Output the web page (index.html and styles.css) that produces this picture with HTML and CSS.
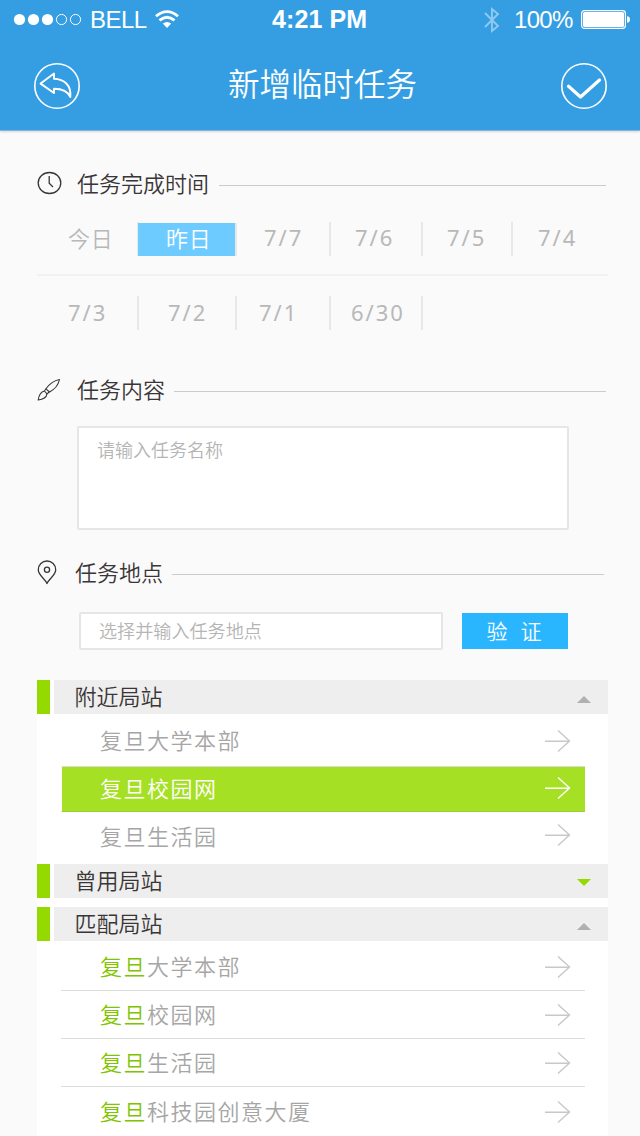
FILE: index.html
```html
<!DOCTYPE html>
<html lang="zh-CN">
<head>
<meta charset="utf-8">
<title>新增临时任务</title>
<link rel="stylesheet" href="styles.css">
</head>
<body>
<svg class="defs" width="0" height="0">
  <symbol id="arrow" viewBox="0 0 26 22"><path d="M0 11.2H24.5M13 .5L24.5 11L13 21.5"/></symbol>
</svg>
<header class="header">
  <div class="status">
    <div class="status-left">
      <svg width="70" height="14" viewBox="0 0 70 14"><g fill="#fff"><circle cx="6.5" cy="6.5" r="5.6"/><circle cx="20.5" cy="6.5" r="5.6"/><circle cx="34.5" cy="6.5" r="5.6"/></g><g fill="none" stroke="#fff"><circle cx="48.5" cy="6.5" r="5.1"/><circle cx="62.5" cy="6.5" r="5.1"/></g></svg>
      <span class="carrier">BELL</span>
      <svg class="wifi" width="24" height="19" viewBox="0 0 24 19"><g fill="none" stroke="#fff" stroke-width="2.8"><path d="M1 6.2Q12-3 23 6.2"/><path d="M4.5 10.4Q12 4.1 19.5 10.4"/></g><path fill="#fff" d="M7.8 13.6Q12 10.2 16.2 13.6L12 18Z"/></svg>
    </div>
    <div class="clock">4:21 PM</div>
    <div class="status-right">
      <svg width="18" height="28" viewBox="0 0 18 28"><path fill="none" stroke="#fff" stroke-opacity=".45" stroke-width="1.9" d="M3 7L16 20L10 25V3L16 8L3 21"/></svg>
      <span class="percent">100%</span>
      <svg width="50" height="20" viewBox="0 0 50 20"><rect x=".6" y=".6" width="43.8" height="17.8" rx="2.8" fill="none" stroke="#fff" stroke-width="1.2"/><rect x="2" y="2" width="41" height="15" rx="1.5" fill="#fff"/><path fill="#fff" d="M46 6.2Q49 6.6 49 9.5T46 12.8Z"/></svg>
    </div>
  </div>
  <div class="nav">
    <svg width="48" height="48" viewBox="0 0 48 48"><g fill="none" stroke="#fff"><circle cx="24" cy="24" r="22.2" stroke-width="1.6"/><path stroke-width="1.9" stroke-linejoin="round" d="M7.6 21.6L21 11.5V16.7C31 17 38.5 23 37.3 35C35 29.5 30 26.7 21 26.7V31Z"/></g></svg>
    <h1 class="title">新增临时任务</h1>
    <svg width="48" height="48" viewBox="0 0 48 48"><g fill="none" stroke="#fff"><circle cx="24" cy="24" r="22.2" stroke-width="1.6"/><path stroke-width="3.2" stroke-linecap="round" stroke-linejoin="round" d="M8.5 24.3L20.5 35L39.5 18"/></g></svg>
  </div>
</header>

<section class="time">
  <div class="heading">
    <svg width="26" height="26" viewBox="0 0 26 26"><g fill="none" stroke="#3a3637" stroke-width="1.3"><ellipse cx="12.5" cy="13" rx="11.3" ry="10.5"/><path d="M12.2 6V13.2L16 17"/></g></svg>
    <h2>任务完成时间</h2><i class="rule"></i>
  </div>
  <div class="dates">
    <span class="date day c1">今日</span><span class="date day c2 selected">昨日</span><span class="date c3">7/7</span><span class="date c4">7/6</span><span class="date c5">7/5</span><span class="date c6">7/4</span>
  </div>
  <div class="dates second">
    <span class="date c1">7/3</span><span class="date c2">7/2</span><span class="date c3">7/1</span><span class="date c4">6/30</span>
  </div>
</section>

<section class="content">
  <div class="heading">
    <svg width="26" height="26" viewBox="0 0 26 26"><g fill="none" stroke="#3a3637" stroke-width="1.1" stroke-linejoin="round"><path d="M22.5 2.5C21.5 7 18.5 12 12.5 15L9 11.8C12 7.5 17 3.5 22.5 2.5Z"/><path d="M9 11.8L7.4 14L10 16.8L12.5 15"/><path d="M7.4 14C4 14.8 2 17.5 1.2 23C6 22.4 9.4 20.5 10 16.8"/></g></svg>
    <h2>任务内容</h2><i class="rule"></i>
  </div>
  <div class="textarea">请输入任务名称</div>
</section>

<section class="place">
  <div class="heading">
    <svg width="26" height="26" viewBox="0 0 26 26"><g fill="none" stroke="#3a3637" stroke-width="1.3" stroke-linejoin="round"><path d="M10 23.5C8.5 19 1.3 15.5 1.3 9.7A8.7 8.7 0 0 1 18.7 9.7C18.7 15.5 11.5 19 10 23.5Z"/><circle cx="10" cy="9.7" r="2.6"/></g></svg>
    <h2>任务地点</h2><i class="rule"></i>
  </div>
  <div class="verify">
    <div class="input">选择并输入任务地点</div>
    <div class="button"><span>验</span><span>证</span></div>
  </div>
</section>

<main class="stations">
  <div class="group"><span>附近局站</span><i class="up"></i></div>
  <ul class="near">
    <li>复旦大学本部<svg class="arrow"><use href="#arrow"/></svg></li>
    <li class="active">复旦校园网<svg class="arrow"><use href="#arrow"/></svg></li>
    <li>复旦生活园<svg class="arrow"><use href="#arrow"/></svg></li>
  </ul>
  <div class="group used"><span>曾用局站</span><i class="down"></i></div>
  <div class="group"><span>匹配局站</span><i class="up"></i></div>
  <ul class="match">
    <li><b>复旦</b>大学本部<svg class="arrow"><use href="#arrow"/></svg></li>
    <li><b>复旦</b>校园网<svg class="arrow"><use href="#arrow"/></svg></li>
    <li><b>复旦</b>生活园<svg class="arrow"><use href="#arrow"/></svg></li>
    <li><b>复旦</b>科技园创意大厦<svg class="arrow"><use href="#arrow"/></svg></li>
  </ul>
</main>
</body>
</html>
```
FILE: styles.css
```css
* { box-sizing: border-box; }
html, body { margin: 0; padding: 0; }
body {
  width: 640px; height: 1136px; overflow: hidden; background: #fafafa;
  font-family: "Noto Sans CJK SC", sans-serif; font-weight: 350; color: #3a3637;
  display: flex; flex-direction: column;
}
svg { display: block; flex: none; }
.defs { display: none; }
h1, h2, ul { margin: 0; padding: 0; font-weight: inherit; list-style: none; }

.header { flex: none; height: 131px; background: #359ee3; border-bottom: 1px solid #82b7da; box-shadow: 0 1px 2px rgba(0,0,0,.14); color: #fff; }
.status { display: grid; grid-template-columns: 272px 1fr 158px; height: 40px; line-height: 40px; font-family: "Liberation Sans", sans-serif; }
.status-left { display: flex; align-items: center; padding-left: 13px; }
.carrier { margin-left: 7px; width: 65px; font-size: 24px; letter-spacing: -.5px; }
.wifi { margin-top: -2px; }
.clock { font-size: 25px; font-weight: 700; line-height: 39px; letter-spacing: .1px; }
.status-right { display: flex; align-items: center; }
.status-right svg { margin-top: -1px; }
.percent { margin-left: 14px; width: 67px; font-size: 24px; letter-spacing: -.7px; }
.nav { display: flex; justify-content: space-between; align-items: center; height: 91px; padding: 0 32px 0 33px; }
.title { font-size: 31.5px; line-height: 40px; margin: -7px 0 0 4px; }

.heading { display: flex; align-items: center; height: 26px; }
.heading h2 { font-size: 22px; line-height: 26px; margin: -4px 0 0 14px; }
.rule { flex: 1; height: 1px; margin: 3px 34px 0 9px; background: #ccc; }
.time { flex: none; height: 245px; padding: 39px 0 0 37px; }
.time .heading h2 { margin-top: -3px; }
.time .rule { margin: 4px 34px 0 10px; }
.dates { display: grid; grid-template-columns: 102px 98px 94px 92px 90px 95px; width: 571px; height: 54px; margin-top: 26px; border-bottom: 2px solid #f1f1f1; }
.second { margin-top: 20px; border: 0; }
.date { height: 34px; line-height: 31px; border-right: 2px solid #e8e8e8; font-size: 22px; letter-spacing: 2px; color: #b8b8b8; font-family: "Noto Sans", "Noto Sans CJK SC", sans-serif; font-weight: 400; white-space: nowrap; }
.day { font-weight: 350; letter-spacing: .8px; line-height: 33px; }
.c1 { padding-left: 31px; }
.c2 { padding-left: 28px; }
.c3 { padding-left: 27px; }
.c4 { padding-left: 24px; }
.c5 { padding-left: 24px; }
.c6 { padding-left: 25px; border: 0; }
.second .date { line-height: 32px; }
.second .c2 { padding-left: 29px; }
.second .c3 { padding-left: 22px; }
.second .c4 { padding-left: 20px; }
.selected { height: 33px; margin: 1px 0 0 -1px; line-height: 31px; background: #6dcbff; background-clip: padding-box; color: #fff; }

.content { flex: none; height: 183px; padding: 1px 0 0 37px; }
.textarea { width: 492px; height: 104px; margin: 23px 0 0 40px; padding: 8px 18px; border: 2px solid #e6e6e6; border-radius: 2px; background: #fff; color: #b5b5b5; font-size: 18px; line-height: 26px; }
.place { flex: none; height: 121px; padding: 1px 0 0 37px; }
.place .heading h2 { margin-left: 12px; }
.place .rule { margin: 3px 36px 0 9px; }
.verify { display: flex; align-items: center; gap: 19px; margin: 26px 0 0 42px; height: 38px; }
.input { width: 364px; height: 38px; padding-left: 18px; border: 2px solid #e6e6e6; border-radius: 2px; background: #fff; color: #b5b5b5; font-size: 18.1px; line-height: 32px; }
.button { display: flex; justify-content: center; gap: 13px; width: 106px; height: 36px; padding-right: 2px; background: #29b6ff; color: #fff; font-size: 21px; line-height: 35px; }

.stations { flex: none; width: 571px; height: 456px; margin-left: 37px; background: #fff; }
.group { display: flex; justify-content: space-between; align-items: center; height: 34px; padding: 0 17px 0 37.5px; background: linear-gradient(90deg, #94da00 13px, #fff 13px 17px, #eee 17px); font-size: 22px; line-height: 34px; }
.group span { margin-top: -4px; }
.used { margin-bottom: 9px; }
.up, .down { margin-top: 4px; border: 7px solid transparent; border-top: 0; border-bottom: 7px solid #b0b0b0; }
.down { margin-top: 3px; border-bottom: 0; border-top: 7px solid #94da00; }
.near, .match { padding: 0 23px 0 24px; }
li { display: flex; align-items: center; height: 48px; padding: 0 14px 4px 39px; font-size: 22px; line-height: 32px; letter-spacing: 1.5px; color: #a6a6a6; }
li b { font-weight: inherit; color: #7fc400; }
.arrow { width: 26px; height: 22px; margin: 5px 0 0 auto; fill: none; stroke: #c8c8c8; stroke-width: 1.4; }
.near { height: 150px; }
.near li:first-child { height: 52px; padding-bottom: 2px; }
.near li:first-child .arrow { margin-top: 4px; }
.active { height: 46px; border-top: 1px solid #d9dfcf; background: #a6e025; color: #fff; border-left: 1px solid #fff; padding-left: 38px; border-bottom: 1px solid #a1cd3b; }
.active .arrow { stroke: #fff; margin-top: 2px; }
.near li:last-child { height: 52px; padding-bottom: 6px; }
.near li:last-child .arrow { margin-top: 0; }
.match li { border-bottom: 1px solid #ddd; padding-bottom: 3px; }
.match .arrow { margin-top: 3px; }
.match li:first-child { height: 50px; padding-bottom: 1px; }
.match li:last-child { border: 0; height: 49px; padding-bottom: 3px; }
```
